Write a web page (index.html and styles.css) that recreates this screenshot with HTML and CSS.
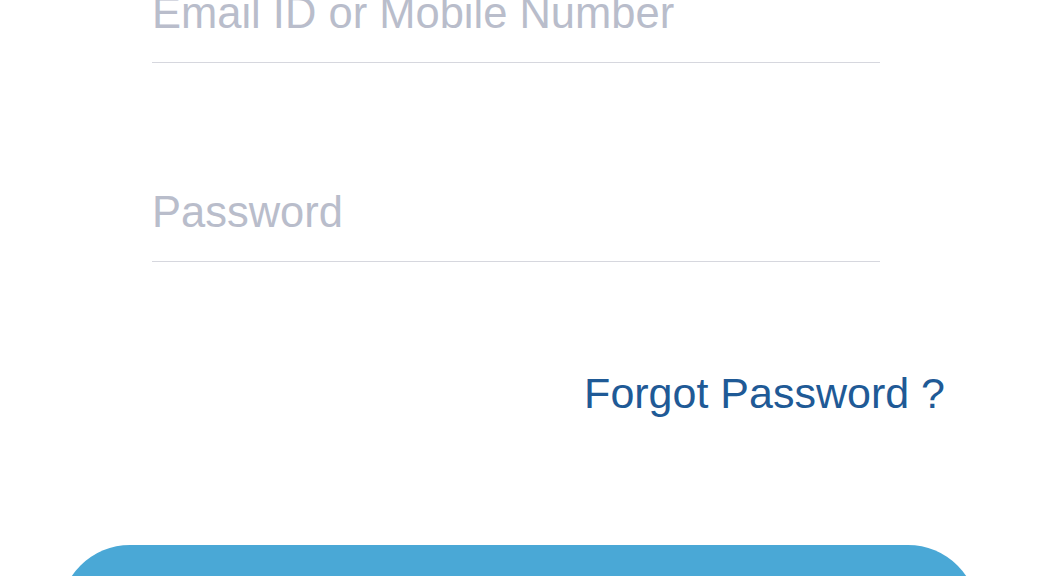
FILE: index.html
```html
<!doctype html>
<html lang="en">
  <head>
    <meta charset="UTF-8" />
    <meta name="viewport" content="width=device-width, initial-scale=1.0" />
    <title>Sign In</title>
    <link rel="stylesheet" href="styles.css">
  </head>
  <body>
    <div class="login">
      <form class="login-form">
        <div class="fields">
          <input class="field" type="text" placeholder="Email ID or Mobile Number" />
          <input class="field" type="password" placeholder="Password" />
        </div>

        <div class="forgot-row">
          <a class="forgot" href="#">Forgot Password ?</a>
        </div>

        <button class="login-btn" type="submit" aria-label="Login"></button>
      </form>
    </div>
  </body>
</html>
```

FILE: styles.css
```css
body {
  margin: 0;
  background: #ffffff;
  font-family: "Liberation Sans", Arial, sans-serif;
  overflow: hidden;
}
.login {
  padding: 0 60px;
}
.login-form {
  display: flex;
  flex-direction: column;
  margin-top: -9px;
}
.fields {
  display: flex;
  flex-direction: column;
  gap: 127px;
  padding-left: 92px;
  width: 728px;
}
.field {
  box-sizing: content-box;
  width: 100%;
  height: 44px;
  padding: 0 0 27px 0;
  margin: 0;
  border: none;
  border-bottom: 1px solid #d6d7de;
  font-family: inherit;
  font-size: 43.5px;
  line-height: 44px;
  color: #3a3f4a;
  background: transparent;
  outline: none;
}
.field::placeholder {
  color: #b9bdcb;
}
.forgot-row {
  display: flex;
  justify-content: flex-end;
  padding-right: 33px;
  margin-top: 109px;
}
.forgot {
  font-size: 43px;
  line-height: 44px;
  color: #1f5a96;
  text-decoration: none;
}
.login-btn {
  margin-top: 130px;
  height: 140px;
  border: none;
  border-radius: 70px;
  background: #4aa8d6;
}
```
